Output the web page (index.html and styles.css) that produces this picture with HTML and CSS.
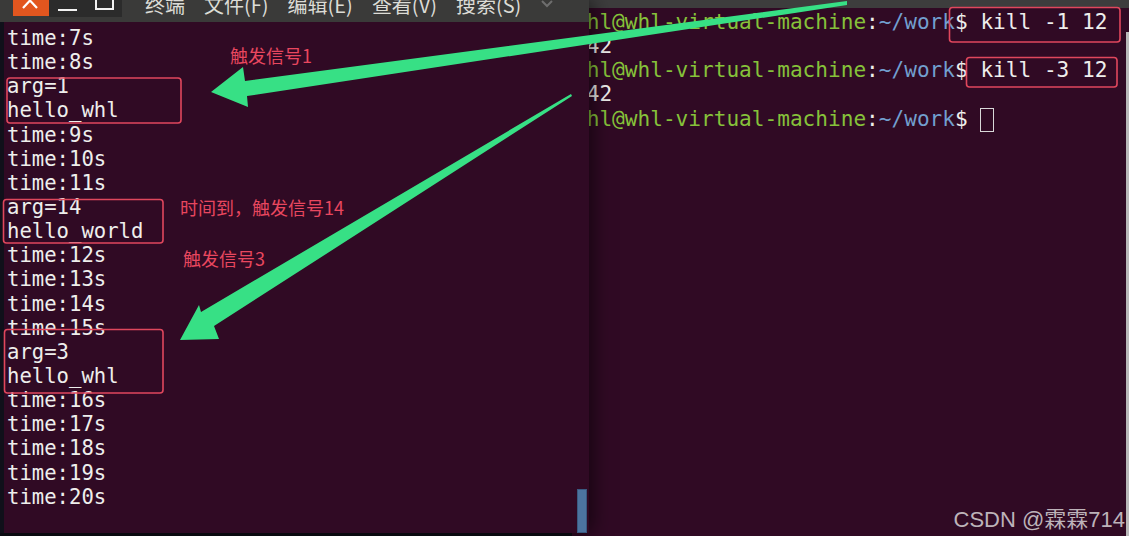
FILE: index.html
```html
<!DOCTYPE html>
<html lang="zh-CN">
<head>
    <meta charset="UTF-8">
    <meta name="viewport" content="width=device-width, initial-scale=1.0">
    <title>kill 信号测试</title>
    <link rel="stylesheet" href="styles.css">
</head>
<body>
    <div class="desktop">
        <div class="window right-win">
            <div class="top-strip"></div>
            <div class="right-body">
                <div class="term right-term">
                    <div class="line"><span class="user">whl@whl-virtual-machine</span>:<span class="path">~/work</span>$ kill -1 12</div>
                    <div class="line"> 42</div>
                    <div class="line"><span class="user">whl@whl-virtual-machine</span>:<span class="path">~/work</span>$ kill -3 12</div>
                    <div class="line"> 42</div>
                    <div class="line"><span class="user">whl@whl-virtual-machine</span>:<span class="path">~/work</span>$ <span class="cursor"></span></div>
                </div>
                <div class="right-scroll"></div>
            </div>
        </div>

        <div class="window left-win">
            <div class="titlebar">
                <div class="btn-close">
                    <svg width="36" height="16" viewBox="0 0 36 16">
                        <path d="M10 -7 L24 8 M24 -7 L10 8" stroke="#fff" stroke-width="2.2" fill="none"/>
                    </svg>
                </div>
                <div class="btn-group">
                    <svg width="73" height="17" viewBox="0 0 73 17">
                        <path d="M9 10 H28" stroke="#f2f2f2" stroke-width="2" fill="none"/>
                        <rect x="47" y="-8" width="17" height="17" stroke="#f2f2f2" stroke-width="2" fill="none"/>
                    </svg>
                </div>
                <nav class="menu">
                    <span>终端</span>
                    <span>文件(F)</span>
                    <span>编辑(E)</span>
                    <span>查看(V)</span>
                    <span>搜索(S)</span>
                </nav>
                <svg class="menu-drop" width="12" height="8" viewBox="0 0 12 8">
                    <path d="M1 1 L6 6 L11 1" stroke="#6e6e6e" stroke-width="2" fill="none"/>
                </svg>
            </div>
            <div class="left-body">
                <div class="term left-term">
                    <div class="line">time:7s</div>
                    <div class="line">time:8s</div>
                    <div class="line">arg=1</div>
                    <div class="line">hello_whl</div>
                    <div class="line">time:9s</div>
                    <div class="line">time:10s</div>
                    <div class="line">time:11s</div>
                    <div class="line">arg=14</div>
                    <div class="line">hello_world</div>
                    <div class="line">time:12s</div>
                    <div class="line">time:13s</div>
                    <div class="line">time:14s</div>
                    <div class="line">time:15s</div>
                    <div class="line">arg=3</div>
                    <div class="line">hello_whl</div>
                    <div class="line">time:16s</div>
                    <div class="line">time:17s</div>
                    <div class="line">time:18s</div>
                    <div class="line">time:19s</div>
                    <div class="line">time:20s</div>
                </div>
                <div class="scrollbar"><div class="thumb"></div></div>
            </div>
        </div>

        <svg class="marks" width="1129" height="536" viewBox="0 0 1129 536">
            <polygon class="arrow" points="847,1 245,81 243,67 211,92 248,107 247,96 847,5"/>
            <polygon class="arrow" points="571,94 201,312 199,305 180,340 219,339 214,326 572,96"/>
            <rect class="box" x="7" y="78" width="174" height="45" rx="3"/>
            <rect class="box" x="3.5" y="199.5" width="159.5" height="43.5" rx="3"/>
            <rect class="box" x="4.5" y="329.5" width="158.5" height="63.5" rx="3"/>
            <rect class="box" x="949.5" y="7.5" width="170.5" height="34.5" rx="3"/>
            <rect class="box" x="966.5" y="57.5" width="150.5" height="29.5" rx="3"/>
        </svg>

        <div class="note note-1">触发信号1</div>
        <div class="note note-2">时间到，触发信号14</div>
        <div class="note note-3">触发信号3</div>

        <div class="watermark">CSDN @霖霖714</div>
    </div>
</body>
</html>
```

FILE: styles.css
```css
* {
    box-sizing: border-box;
}
body {
    margin: 0;
    background-color: #0e0d15;
    overflow: hidden;
}
.desktop {
    position: relative;
    width: 1129px;
    height: 536px;
    overflow: hidden;
}
.window {
    position: absolute;
    display: flex;
    flex-direction: column;
    overflow: hidden;
}
.term {
    font-family: "DejaVu Sans Mono", "Liberation Mono", monospace;
    font-size: 20.6px;
    line-height: 24.15px;
    color: #eeeeec;
}
.term .line {
    white-space: pre;
    height: 24.15px;
}

/* right terminal (behind) */
.right-win {
    left: 572px;
    top: 0;
    right: 0;
    bottom: 0;
    background-color: #300a24;
}
.top-strip {
    flex: none;
    height: 8px;
    background-color: #3d3d3d;
}
.right-body {
    flex: 1;
    min-height: 0;
    display: flex;
}
.right-term {
    flex: 1;
    padding: 2px 0 0 2px;
    font-size: 21.1px;
}
.right-term .user {
    color: #86c23a;
}
.right-term .path {
    color: #729fcf;
}
.cursor {
    display: inline-block;
    width: 14px;
    height: 24px;
    border: 1.5px solid #d8d8d8;
    vertical-align: -6px;
}
.right-scroll {
    width: 3px;
    margin-top: 24px;
    background-color: #b9b9b9;
}

/* left terminal (front) */
.left-win {
    left: 0;
    top: 0;
    width: 589px;
    height: 533px;
    background-color: #300a24;
    box-shadow: 4px 0 18px rgba(0, 0, 0, 0.55);
}
.titlebar {
    flex: none;
    height: 22px;
    background-color: #3a3a39;
    display: flex;
    align-items: flex-start;
    overflow: hidden;
}
.btn-close {
    margin-left: 13px;
    width: 36px;
    height: 16px;
    background-color: #e2561f;
}
.btn-close svg,
.btn-group svg {
    display: block;
}
.btn-group {
    width: 73px;
    height: 17px;
    background-color: #2b2b2b;
}
.menu {
    display: flex;
    gap: 19px;
    margin-left: 23px;
    margin-top: -7px;
    font-family: "Noto Sans CJK SC", sans-serif;
    font-size: 20px;
    line-height: 24px;
    color: #dcdcd6;
    white-space: nowrap;
}
.menu-drop {
    margin-left: 20px;
    margin-top: 0;
}
.left-body {
    flex: 1;
    min-height: 0;
    display: flex;
    border-left: 4px solid #10101a;
}
.left-term {
    flex: 1;
    padding: 4px 0 0 3px;
}
.scrollbar {
    width: 12px;
    display: flex;
    flex-direction: column;
    justify-content: flex-end;
    padding-right: 2px;
}
.thumb {
    height: 44px;
    background-color: #4c74a0;
    border: 1px solid #3a5a80;
}

/* annotations */
.marks {
    position: absolute;
    left: 0;
    top: 0;
}
.arrow {
    fill: #37e085;
}
.box {
    fill: none;
    stroke: #e0475d;
    stroke-width: 1.6;
}
.note {
    position: absolute;
    font-family: "Noto Sans CJK SC", sans-serif;
    font-size: 18px;
    line-height: 22px;
    color: #e8475f;
}
.note-1 {
    left: 230px;
    top: 44px;
}
.note-2 {
    left: 180px;
    top: 196px;
}
.note-3 {
    left: 183px;
    top: 247px;
}
.watermark {
    position: absolute;
    right: 4px;
    bottom: 3px;
    font-family: "Liberation Sans", "Noto Sans CJK SC", sans-serif;
    font-size: 22px;
    line-height: 26px;
    color: #bdb3b9;
}
```
